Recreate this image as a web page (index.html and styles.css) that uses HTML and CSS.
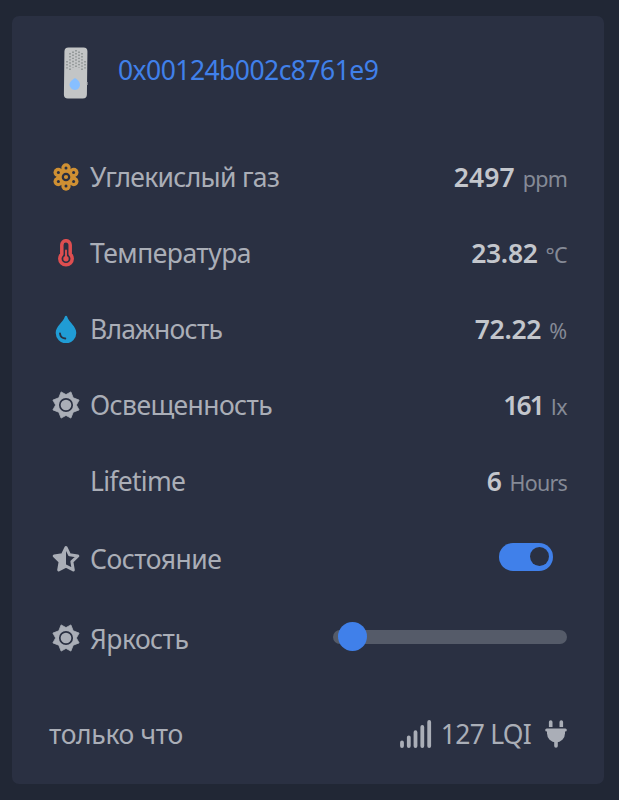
FILE: index.html
```html
<!DOCTYPE html>
<html lang="ru"><head><meta charset="utf-8"><title>0x00124b002c8761e9</title><meta name="viewport" content="width=device-width, initial-scale=1">
<link rel="stylesheet" href="styles.css">
</head><body>
<div class="card">
<div class="head">
<svg class="device" viewBox="0 0 26 54">
<rect x="1.500" y="1.500" width="23" height="51" rx="4" fill="#c3c5c6" transform="skewX(-.7)"/>
<path d="M24.300 36v3" stroke="#8d9298"/>
<g stroke="#7f8585" stroke-width="1.300" stroke-dasharray="1.400 1.700"><path d="M13 4v17M10 5.500v16M16 5.500v16M7 7v17M19 7v17M4 15v9M22 15v9"/></g>
<path d="M12 32c3 2 5 4 5 6.500s-2 5.500-5 5.500-5.500-3-5.500-5.500 2.500-4.500 5.500-6.500z" fill="#87bfff"/>
</svg>
<a class="name">0x00124b002c8761e9</a>
</div>
<div class="row"><span class="icon">
<svg viewBox="0 0 28 28"><g fill="#cf9033"><circle cx="14" cy="14" r="9.300"/><circle cx="14" cy="5" r="4.700"/><circle cx="14" cy="23" r="4.700"/><circle cx="6.200" cy="9.500" r="4.700"/><circle cx="21.800" cy="9.500" r="4.700"/><circle cx="6.200" cy="18.500" r="4.700"/><circle cx="21.800" cy="18.500" r="4.700"/></g><g fill="#2a3042"><circle cx="14" cy="4.900" r="1.500"/><circle cx="14" cy="23.100" r="1.500"/><circle cx="6.400" cy="9.600" r="1.500"/><circle cx="21.600" cy="9.600" r="1.500"/><circle cx="6.400" cy="18.400" r="1.500"/><circle cx="21.600" cy="18.400" r="1.500"/></g><circle cx="14" cy="14" r="3.200" fill="#cf9033" stroke="#2a3042" stroke-width="2.200"/></svg>
</span><span class="label l1">Углекислый газ</span><b class="v1">2497</b><small class="u1">ppm</small></div>
<div class="row"><span class="icon">
<svg viewBox="0 0 28 28"><path d="M9.800 5.900a4.200 4.200 0 0 1 8.400 0v9.200a6.200 6.200 0 1 1-8.400 0z" fill="none" stroke="#de4e50" stroke-width="3.500" stroke-linejoin="round"/><path d="M14 11.500v8" stroke="#de4e50" stroke-width="1.900" stroke-linecap="round"/><circle cx="14" cy="19.800" r="2.700" fill="#de4e50"/></svg>
</span><span class="label l2">Температура</span><b>23.82</b><small class="u2">°C</small></div>
<div class="row"><span class="icon">
<svg viewBox="0 0 28 28"><path d="M12.900 1.500c.3-1.100 1.900-1.100 2.200 0C17 7.500 24.300 11.200 24.300 18a10.300 10.300 0 0 1-20.600 0C3.700 11.200 11 7.500 12.900 1.500z" fill="#209cd5"/><path d="M8 18.500c.3 3 2.200 4.800 5.300 5" fill="none" stroke="#2a3042" stroke-width="1.900" stroke-linecap="round"/></svg>
</span><span class="label l3">Влажность</span><b>72.22</b><small>%</small></div>
<div class="row"><span class="icon">
<svg viewBox="0 0 28 28"><path class="sun" d="M14 3.600 18.900.9 21.200 6.800 27.100 9.100 24.400 14 27.100 18.900 21.200 21.200 18.900 27.100 14 24.400 9.100 27.100 6.800 21.200.9 18.900 3.600 14 .9 9.100 6.800 6.800 9.100.9z"/><circle class="disc" cx="14" cy="14" r="6.200"/></svg>
</span><span class="label l4">Освещенность</span><b class="v4">161</b><small class="u4">lx</small></div>
<div class="row"><span class="icon"></span><span class="label l5">Lifetime</span><b>6</b><small class="u5">Hours</small></div>
<div class="row state"><span class="icon">
<svg viewBox="0 0 28 28"><path d="M14 2.500 17.600 9.800 25.800 11 19.900 16.700 21.300 24.900 14 21.100 6.700 24.900 8.100 16.700 2.200 11 10.400 9.800z" fill="none" stroke="#aaaeb7" stroke-width="3" stroke-linejoin="round"/><path class="fill" d="M14 2.500V21.100L6.700 24.900 8.100 16.700 2.200 11 10.400 9.800z"/></svg>
</span><span class="label l6">Состояние</span><span class="toggle"></span></div>
<div class="row bright"><span class="icon">
<svg viewBox="0 0 28 28"><path class="sun" d="M14 3.600 18.900.9 21.200 6.800 27.100 9.100 24.400 14 27.100 18.900 21.200 21.200 18.900 27.100 14 24.400 9.100 27.100 6.800 21.200.9 18.900 3.600 14 .9 9.100 6.800 6.800 9.100.9z"/><circle class="disc" cx="14" cy="14" r="6.200"/></svg>
</span><span class="label l7">Яркость</span><span class="slider"><span class="thumb"></span></span></div>
<div class="foot"><span class="seen">только что</span>
<svg class="signal" viewBox="0 0 32 28"><path d="M2 22.500v3.500M8.800 17.300V26M15.500 12.200V26M22.300 7V26M29.200 2V26" stroke="#aaaeb7" stroke-width="3.800" stroke-linecap="round"/></svg>
<span class="lqi">127 LQI</span>
<svg class="plug" viewBox="0 0 22 28"><path d="M5.700 2v6M16.300 2v6M11 20v6" stroke="#aaaeb7" stroke-width="3.600" stroke-linecap="round"/><path d="M.7 9.300h20.600" stroke="#2a3042" stroke-width="4.500"/><path d="M1.700 10h18.600" stroke="#aaaeb7" stroke-width="3" stroke-linecap="round"/><path class="fill" d="M2 10h18v3.500a9 9 0 0 1-18 0z"/></svg>
</div>
</div>
</body></html>
```
FILE: styles.css
```css
*{box-sizing:border-box}
body{margin:0;padding:16px 15px 16px 12px;background-color:#212735;color:#aaaeb7;font-family:"Noto Sans","Open Sans",sans-serif;font-size:26.5px;line-height:36px}
.card{height:768px;border-radius:7px;background-color:#2a3042;padding:0 37px}
svg{display:block;flex:none}
.fill{fill:#aaaeb7}
.sun{fill:#aaaeb7;stroke:#aaaeb7;stroke-width:.8;stroke-linejoin:round}
.disc{fill:#aaaeb7;stroke:#2a3042;stroke-width:1.7}
.head{height:123px;padding:30px 0 0 14px;display:flex;align-items:flex-start}
.device{width:26px;height:54px}
.name{color:#4080ea;margin:6px 0 0 29px;letter-spacing:-.55px}
.row{height:76px;display:flex;align-items:center;white-space:nowrap}
.icon{width:28px;height:28px;margin:-1px 10px 0 3px;flex:none}
.icon svg{width:28px;height:28px}
.label{flex:1}
.l1{letter-spacing:-.7px}
.l2{letter-spacing:-.5px}
.l3{letter-spacing:-.75px}
.l4{letter-spacing:-.6px}
.l5{letter-spacing:-.7px}
.l6{letter-spacing:-.5px}
.l7{letter-spacing:-.55px}
b{font-weight:600;color:#c3c6cc;letter-spacing:-.3px}
small{font-size:21.5px;color:#858a96;margin:3px 0 0 8px}
.v1{letter-spacing:.1px}
.u1{letter-spacing:-.8px}
.u2{letter-spacing:-.7px}
.v4{letter-spacing:-1.9px}
.u4{letter-spacing:-.5px}
.u5{letter-spacing:-.8px}
.state{height:80px}
.bright{height:79px}
.toggle{width:54px;height:28px;margin:-4px 14px 0 0;border-radius:14px;background-color:#4080ea;padding:4px 4px 4px 31px}
.toggle:before{content:"";display:block;width:19px;height:19px;border-radius:50%;background-color:#2a3042}
.slider{width:234px;height:14px;margin-top:-3px;border-radius:7px;background-color:#555b69;display:flex;align-items:center;padding-left:5px}
.thumb{width:29px;height:29px;border-radius:50%;background-color:#4080ea;flex:none;margin-top:-1px}
.foot{height:112px;display:flex;align-items:center}
.seen{flex:1;letter-spacing:-.35px}
.signal{width:32px;height:28px;margin-right:9px}
.lqi{letter-spacing:-.75px}
.plug{width:22px;height:28px;margin-left:14px}
```
